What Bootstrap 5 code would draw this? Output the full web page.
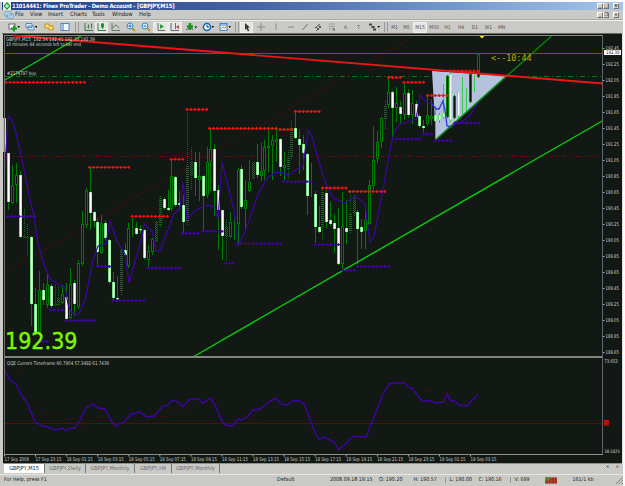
<!DOCTYPE html>
<html lang="en">
<head>
  <meta charset="UTF-8" />
  <meta name="viewport" content="width=device-width, initial-scale=1.0"/>
  <title>Finex ProTrader</title>
  <link href="https://cdn.jsdelivr.net/npm/bootstrap@5.3.0/dist/css/bootstrap.min.css" rel="stylesheet">
  <style>
    body {
      width: 625px; height: 486px; overflow: hidden;
      background: #fbfbfb; padding-top: 2px;
      font-family: "DejaVu Sans Condensed", "DejaVu Sans", sans-serif;
      font-size: 5.5px; line-height: 1; color: #1c1c1c;
    }
    .terminal { width: 623px; height: 484px; background: #c9c9c5 repeating-conic-gradient(#d0d0cc 0 25%, #c3c3bf 0 50%) 0 0 / 2px 2px; }
    .title-strip { height: 8px; margin-left: 2px; background: linear-gradient(90deg, #20428c, #4463a2 40%, #7093c8 70%, #a5c5ea); color: #fff; font: bold 5.8px "DejaVu Sans Condensed", "DejaVu Sans", sans-serif; letter-spacing: -.2px; }
    .menu-strip { height: 10px; padding-left: 4px; border-bottom: 1px solid #aaa; font-size: 5.8px; }
    .menu-strip .entry { white-space: nowrap; }
    .tool-strip { height: 13px; border-top: 1px solid #eee; padding-left: 5px; font-size: 5px; color: #555; }
    .tool-strip .slot { height: 11px; flex: none; }
    .tool-strip .pressed { background: #e4e4e1; outline: 1px solid #eeeeec; outline-offset: -1px; }
    .tool-strip svg { width: 12px; height: 10px; }
    .win-btn { width: 6px; height: 6px; background: #d0d0cc; border: 1px solid #777; border-top-color: #fff; border-left-color: #fff; color: #111; font-size: 5px; line-height: 3px; letter-spacing: 0; }
    .workspace { height: 431px; flex: none; padding-left: 2px; }
    .workspace svg { display: block; }
    .tab-strip { height: 9px; padding-left: 4px; color: #6c6c6c; }
    .tab-strip .sheet { height: 9px; border-right: 1px solid #777; flex: none; padding-top: 2px; white-space: nowrap; }
    .tab-strip .current { background: #fff; color: #222; }
    .status-strip { height: 11px; margin-top: 1px; border-top: 1px solid #e6e6e6; font-size: 5.3px; }
    .status-strip .cell { flex: none; white-space: nowrap; }
    .status-strip .ruled { border-left: 1px solid #999; }
  </style>
  <script src="https://cdn.jsdelivr.net/npm/bootstrap@5.3.0/dist/js/bootstrap.bundle.min.js"></script>
</head>
<body>

  <!-- toolbar icons -->
  <svg class="d-none">
    <symbol id="newchart" viewBox="0 0 12 10"><rect x="1" y="2" width="6" height="5" fill="#fff" stroke="#567"/><path d="M3 6.5h6M6 3.5v6" stroke="#14a014" stroke-width="2"/><path d="M9.5 4H12l-1.2 2z"/></symbol>
    <symbol id="profiles" viewBox="0 0 12 10"><path d="M1 1.5h6v4H1zM3 4h6v4H3z" fill="#dcecfa" stroke="#5d86b5"/><path d="M10 4h2.5l-1.2 2z"/></symbol>
    <symbol id="market" viewBox="0 0 12 10"><path d="M2 2h4v2h4v4H6V6H2z" fill="#ffe37a" stroke="#c09018"/></symbol>
    <symbol id="navi" viewBox="0 0 12 10"><rect x="2" y="1.5" width="8" height="7" fill="#f4f8ff" stroke="#5487bd"/><path d="M4 2v6" stroke="#3b74ba"/></symbol>
    <symbol id="bars" viewBox="0 0 12 10"><path d="M2 1v7.5h8M5.500 2.500v4M8.500 1.500v5M4.500 5h1M8.500 3h1" fill="none" stroke="#3d7c46"/></symbol>
    <symbol id="candle" viewBox="0 0 12 10"><path d="M2 1v7.5h8M6.500 0v7" fill="none" stroke="#3d7c46"/><rect x="5" y="1.5" width="3" height="4" fill="#10a020"/></symbol>
    <symbol id="linec" viewBox="0 0 12 10"><path d="M2 1v7.5h8M2 6l4-3 3 3" fill="none" stroke="#5f7d65"/></symbol>
    <symbol id="zin" viewBox="0 0 12 10"><path d="M7 6l3 3" stroke="#c29928" stroke-width="2"/><circle cx="5" cy="4" r="3" fill="#d9efff" stroke="#3f84c6"/><path d="M3.500 4h3M5 2.500v3" stroke="#2166b5"/></symbol>
    <symbol id="zout" viewBox="0 0 12 10"><path d="M7 6l3 3" stroke="#c29928" stroke-width="2"/><circle cx="5" cy="4" r="3" fill="#d9efff" stroke="#3f84c6"/><path d="M3.500 4h3" stroke="#2166b5"/></symbol>
    <symbol id="scroll" viewBox="0 0 12 10"><path d="M3 1v7.5h7" fill="none" stroke="#667"/><path d="M5 2l4 2.500L5 7z" fill="#29a03a"/></symbol>
    <symbol id="shift" viewBox="0 0 12 10"><path d="M2 1v7.5h8M6.500 1v6" fill="none" stroke="#667"/><path d="M10 3v4L7 5z" fill="#b44"/></symbol>
    <symbol id="indic" viewBox="0 0 12 10"><path d="M5 1v7M2 4.500h6" stroke="#129b1a" stroke-width="2.500"/><path d="M1 8l5-3 2 3" fill="none" stroke="#555"/><path d="M9.500 4.500H12l-1.200 2z"/></symbol>
    <symbol id="clock" viewBox="0 0 12 10"><circle cx="5" cy="5" r="3.500" fill="#eef7ff" stroke="#1765b7" stroke-width="1.500"/><path d="M5 3v2h2" fill="none" stroke="#235"/><path d="M9.500 4h2.500l-1.200 2z"/></symbol>
    <symbol id="tmpl" viewBox="0 0 12 10"><rect x="1" y="1.500" width="7" height="7" fill="#e6f3ff" stroke="#4b86c0"/><path d="M1 3h7" stroke="#4b86c0"/><path d="M2 7l2-2 2 1 2-2" fill="none" stroke="#c93"/><path d="M9.500 4h2.500l-1.200 2z"/></symbol>
    <symbol id="arrow" viewBox="0 0 12 10"><path d="M4 1l5 4.500H7L8.200 9l-1.400.3L5.500 6.500 4 8z" fill="#333"/></symbol>
    <symbol id="cross" viewBox="0 0 12 10"><path d="M6 1v8M2 5h8" stroke="#888"/></symbol>
    <symbol id="vline" viewBox="0 0 12 10"><path d="M6 1.500v6.500" stroke="#888"/></symbol>
    <symbol id="hline" viewBox="0 0 12 10"><path d="M3 5h6" stroke="#888"/></symbol>
    <symbol id="trend" viewBox="0 0 12 10"><path d="M3.500 8l5-6" stroke="#777"/></symbol>
    <symbol id="chan" viewBox="0 0 12 10"><path d="M3 6l5-4M4 9l5-5M4 5l3 3M6 3l3 3" stroke="#555"/></symbol>
    <symbol id="fibo" viewBox="0 0 12 10"><path d="M3 2h6M3 4.500h6M3 7h6" stroke="#888" stroke-dasharray="1 .5"/><path d="M8 6v3" stroke="#555"/></symbol>
    <symbol id="marks" viewBox="0 0 12 10"><path d="M1 2.500h3M3.500 5h3M5 7.500h3" stroke="#444" stroke-width="2"/><path d="M9.500 4h2.500l-1.200 2z"/></symbol>
    <symbol id="grip" viewBox="0 0 12 10"><path d="M4.500 0v10M7.500 0v10" stroke="#999"/></symbol>
  </svg>

  <div class="terminal d-flex flex-column">
    <div class="title-strip d-flex align-items-center flex-shrink-0">
      <svg width="10" height="8" viewBox="0 0 10 8"><rect x="1" width="8" height="8" fill="#e8f4e4"/><path d="M5 0l3.500 4L5 8 1.500 4z" fill="#149a2c"/><path d="M5 2v4M3 4h4" stroke="#fff"/></svg>
      <span class="text-nowrap">11014441: Finex ProTrader - Demo Account - [GBPJPY,M15]</span>
      <div class="ms-auto d-flex me-1">
        <span class="win-btn text-center">_</span><span class="win-btn text-center">□</span><span class="win-btn text-center ms-1">×</span>
      </div>
    </div>

    <div class="menu-strip d-flex align-items-center flex-shrink-0" id="menu">
      <svg width="11" height="8" viewBox="0 0 11 8"><path d="M1 1h6v4H1zM3 3h6v4H3z" fill="#e8f4ff" stroke="#6b9cca"/></svg>
    </div>

    <div class="tool-strip d-flex align-items-center flex-shrink-0" id="tools"></div>

    <div class="workspace">
      <svg id="chart" width="621" height="431" viewBox="2 33 621 431" font-family="DejaVu Sans, sans-serif" font-size="5"></svg>
    </div>

    <div class="tab-strip d-flex flex-shrink-0" id="tabs"></div>
    <div class="status-strip d-flex align-items-center flex-shrink-0" id="status"></div>
  </div>

  <script>
    // label, slot width
    const menu = [["File", 15], ["View", 18], ["Insert", 22], ["Charts", 22], ["Tools", 20], ["Window", 27], ["Help", 20]];
    document.getElementById("menu").innerHTML +=
      menu.map(m => `<span class="entry" style="width:${m[1]}px">${m[0]}</span>`).join("") +
      `<div class="ms-auto d-flex me-1"><span class="win-btn text-center">_</span><span class="win-btn text-center">❐</span><span class="win-btn text-center ms-1">×</span></div>`;

    // icon or period, slot width, pressed
    const tools = [["newchart", 17], ["profiles", 18], ["market", 18], ["navi", 14], ["grip", 10], ["bars", 13], ["candle", 13, 1],
      ["linec", 15], ["zin", 15], ["zout", 15], ["scroll", 15, 1], ["shift", 14, 1], ["indic", 18], ["clock", 16], ["tmpl", 18],
      ["grip", 6], ["arrow", 13, 1], ["cross", 15], ["vline", 16], ["hline", 14], ["trend", 13], ["chan", 14], ["fibo", 14],
      ["A", 13], ["T", 13], ["marks", 18], ["grip", 6], ["M1", 11], ["M5", 13], ["M15", 14, 1], ["M30", 14], ["H1", 13], ["H4", 14],
      ["D1", 14], ["W1", 13], ["MN", 13]];
    document.getElementById("tools").innerHTML = tools.map(([n, w, on]) =>
      `<span class="slot d-flex align-items-center justify-content-center${on ? " pressed" : ""}" style="width:${w}px">` +
      (document.getElementById(n) ? `<svg class="flex-shrink-0"><use href="#${n}"/></svg>` : n) + `</span>`).join("");

    const tabs = [["GBPJPY,M15", 41], ["GBPJPY,Daily", 41], ["GBPJPY,Monthly", 49], ["GBPJPY,H4", 37], ["GBPJPY,Monthly", 48]];
    document.getElementById("tabs").innerHTML = tabs.map((t, i) =>
      `<span class="sheet text-center${i ? "" : " current"}" style="width:${t[1]}px">${t[0]}</span>`).join("") +
      `<span class="ms-auto me-1 d-flex gap-2"><span>◂</span><span>▸</span></span>`;

    const cells = [["For Help, press F1", 273], ["Default", 53], ["2008.09.18 19:15", 49], ["O: 190.20", 34.5], ["H: 190.57", 31],
      ["L: 190.00", 34, 1], ["C: 190.16", 31], ["V: 699", 35, 1]];
    document.getElementById("status").innerHTML = `<span class="ps-1 ms-n1"></span>` + cells.map(([t, w, r]) =>
      `<span class="cell${r ? " ruled ps-1" : ""}" style="width:${w}px">${t}</span>`).join("") +
      `<svg width="12" height="7"><path d="M0 .5h12v6H0z" fill="#b33a26"/><path d="M0 .5h6l-2 3H0z" fill="#5a9a2a"/><path d="M2 0v7M5 0v7M8 0v7M11 0v7" stroke="#64302a" stroke-width=".6"/></svg>` +
      `<span class="cell ms-3">161/1 kb</span><svg class="ms-auto" width="8" height="8"><path d="M1 8l7-7M4 8l4-4M7 8l1-1" stroke="#888"/></svg>`;

    const G = "#007c05", P = "#3e05a4", R = "#ef1414";
    let out = "";
    const box = (x, y, w, h, f) => out += `<rect x="${x}" y="${y}" width="${w}" height="${h}" fill="${f}"/>`;
    const line = (x1, y1, x2, y2, c, extra = "") => out += `<path d="M${x1} ${y1}L${x2} ${y2}" stroke="${c}" ${extra}/>`;
    const poly = (pts, c, w) => out += `<polyline points="${pts}" fill="none" stroke="${c}" stroke-width="${w}"/>`;
    const text = (x, y, s, w, c = "#d2d2d2", extra = "") =>
      out += `<text x="${x}" y="${y}" fill="${c}" textLength="${w}" lengthAdjust="spacingAndGlyphs" ${extra}>${s}</text>`;

    box(3, 34, 619, 430, "#121813");
    box(2, 33, 620, 1, "#696965");
    box(4, 35, 599, 1, "#8b8b85");
    box(622, 34, 1, 430, "#dedede");
    line(4, 53.5, 603, 53.5, "#6a5b04");
    line(4, 76.5, 603, 76.5, "#087a0c", 'stroke-dasharray="5 3 1 3"');
    line(4, 156.5, 603, 156.5, "#780306", 'stroke-dasharray="4 2 1 2 1 3"');
    line(4, 273, 410, 39, "#700508", 'stroke-dasharray="2 2" stroke-width=".8"');
    out += `<path d="M432 71L507 76 436 140z" fill="#b4c2df"/>`;

    // x, high, body top, body bottom, low, kind: w falling, g rising, d dotted, k rising on the shaded area
    const candles = `4.5 114 118 152 170 w|8.5 153 153 202 210 w|12.5 165 185 203 204 g|16.5 163 175 185 203 g|20.5 171 175 237 238 w|24.5 209 236 238 239 d
27.5 224 237 239 255 d|31.5 236 237 304 326 w|35.5 288 304 332 333 w|39.5 271 290 332 333 g|43.5 283 290 300 305 w|47.5 273 284 305 308 g|51.5 284 286 306 308 w
55.5 285 304 306 307 d|58.5 287 298 306 307 d|62.5 285 294 303 304 g|66.5 283 297 319 321 w|70.5 268 284 318 320 g|74.5 280 283 304 316 w|78.5 260 263 307 309 g
82.5 211 224 264 266 g|86.5 188 190 225 228 g|90.5 168 192 213 230 w|94.5 211 212 221 227 w|97.5 218 222 252 265 w|101.5 215 223 253 254 g|105.5 220 223 238 240 w
109.5 239 240 282 284 w|113.5 272 282 298 300 w|117.5 276 298 299 301 w|121.5 248 250 292 295 d|125.5 243 250 255 257 w|128.5 223 228 266 268 g
132.5 218 228 228 237 g|136.5 222 228 234 235 w|140.5 225 229 230 234 w|144.5 229 230 258 260 w|148.5 245 251 260 267 g|152.5 238 239 252 255 g
156.5 221 222 242 243 d|160.5 196 198 226 228 d|164.5 197 199 208 210 w|168.5 190 208 210 211 w|171.5 160 176 209 211 g|175.5 176 177 205 207 w
179.5 191 203 205 210 w|183.5 195 205 222 233 w|187.5 112 166 222 225 d|191.5 147 162 176 191 d|195.5 152 162 178 196 w|199.5 152 176 180 201 g
203.5 175 176 196 231 w|207.5 147 162 195 198 g|210.5 128 149 162 191 g|214.5 144 149 191 216 w|218.5 185 190 210 250 w|222.5 210 210 236 260 w
226.5 220 227 237 262 d|230.5 212 222 237 238 g|234.5 217 222 222 240 g|238.5 168 170 224 246 g|241.5 165 169 207 209 w|245.5 180 200 209 230 g
249.5 160 182 191 192 g|253.5 162 163 178 180 d|257.5 144 162 175 178 w|261.5 143 171 176 181 g|264.5 140 147 171 180 g|268.5 129 146 148 172 g
272.5 135 140 146 180 g|276.5 128 139 142 162 g|280.5 138 139 167 176 w|284.5 152 165 168 180 g|288.5 150 158 170 180 d|291.5 120 128 158 160 d
295.5 112 128 138 139 w|299.5 129 139 145 174 w|303.5 135 144 153 170 w|307.5 153 154 196 215 w|311.5 163 196 196 197 g|315.5 191 194 227 243 w
319.5 206 227 232 233 w|322.5 190 192 228 240 d|326.5 190 193 222 228 w|330.5 202 220 224 226 w|334.5 214 223 229 253 w|338.5 208 228 264 265 w
342.5 192 226 264 270 g|346.5 200 228 232 244 w|350.5 192 214 232 234 d|354.5 195 198 213 216 d|357.5 210 212 229 264 w|361.5 219 227 232 249 w
365.5 209 220 231 249 g|369.5 180 185 224 225 g|373.5 126 160 186 190 g|377.5 131 142 159 163 g|381.5 117 118 142 148 g|385.5 100 106 119 130 d
388.5 79 92 105 108 g|392.5 90 92 108 140 w|396.5 87 103 108 122 g|400.5 101 107 114 124 w|404.5 82 93 115 120 g|408.5 89 93 115 118 w
412.5 90 103 115 124 g|416.5 101 104 117 119 w|419.5 114 116 126 128 w|423.5 120 126 128 133 w|427.5 97 115 124 126 g|431.5 99 116 119 125 g
435.5 106 115 121 139 w|439.5 113 115 120 123 w|443.5 84 113 117 119 w|447 75 76 117 118 k|450.5 73 74 120 122 w|454.5 95 96 118 119 k
458.5 92 92 116 120 w|462.5 77 112 113 114 g|466.5 88 111 112 113 g|470.5 73 74 102 103 k|474.5 75 77 78 92 g|478.5 53 54 77 78 g`;
    candles.split(/[|\n]/).forEach(row => {
      const c = row.trim().split(/\s+/), k = c.pop();
      const [x, hi, top, bot, lo] = c.map(Number), px = Math.floor(x);
      const wick = x > 434 && k !== "k" && x < 477 ? "#35c947" : G;
      line(px + .5, hi, px + .5, lo, k === "d" ? "#087310" : wick, k === "d" ? 'stroke-dasharray="1 1"' : "");
      if (k === "w") {
        box(px - 1, top, 3, Math.max(1, bot - top), "#38cf4c");
        box(px - .3, top + .3, 1.9, Math.max(1, bot - top - .6), "#fff");
      } else if (k === "d") {
        out += `<path d="M${px - .5} ${top}v${bot - top}M${px + 1.5} ${top}v${bot - top}" stroke="#355b37" stroke-dasharray="1 1"/>`;
      } else if (bot - top > 1) {
        out += `<rect x="${px - .5}" y="${top + .5}" width="2" height="${bot - top - 1}" fill="#061408" stroke="${G}"/>`;
      }
    });

    // trailing average
    poly(`4,190 8,116 10,118 13,121 20,150 28,190 34,217 38,243 43,262 50,279 58,284 65,287 68,304 71,312 76,315 80,312 86,296
      93,260 98,246 106,244 110,221 118,243 125,254 129,283 136,258 142,237 144,224 152,231 156,251 160,250 168,230 174,214
      180,208 183,182 187,219 195,211 204,206 209,205 215,208 218,219 222,162 229,190 234,210 238,245 245,232 250,217 257,197
      267,178 276,172 285,173 288,176 297,169 303,166 308,130 312,137 317,155 325,182 333,198 345,203 356,196 365,204 370,242
      374,236 381,200 390,150 394,132 400,124 410,121 416,119 420,95 426,102 432,104`, P, 1.2);
    poly("432,104 436,109 439,109 443,101 445,110 447,126 452,127", "#3037e0", 1.3);
    poly("452,127 456,124 463,121 470,115 478,102", P, 1.2);

    line(4, 80.5, 81, 36, "#10c814", 'stroke-width="1.4"');
    line(193, 357, 603, 120.5, "#07cf0b", 'stroke-width="1.4"');
    line(436, 139.5, 551.5, 36, "#087f0d", 'stroke-width="1.6"');
    line(13, 35.5, 603, 83.5, "#ee1515", 'stroke-width="1.9"');

    // channel levels: from, to, y
    const dots = (rows, c) => rows.forEach(([a, b, y]) => {
      for (let x = a; x <= b + 1; x += 3.92) {
        out += `<path d="M${x - 1.5} ${y}h3M${x} ${y - 1.4}v2.8" stroke="${c}" stroke-width="1.3"/>`;
      }
      line(a, y, b, y, c, 'stroke-width=".5"');
    });
    dots([[6, 85, 82.3], [89.5, 129, 167.3], [132, 168, 216.3], [171, 183, 159.3], [187, 207, 109.5], [209.5, 276, 128.5], [280, 292, 129.5],
      [295.5, 319, 111.5], [322.5, 346, 188], [349.5, 385, 191.5], [388.5, 400, 77.5], [404, 424, 82.3], [427.5, 447, 95.5], [450.5, 478, 71]], R);
    dots([[7.5, 36, 216.5], [39, 48, 341.5], [50.5, 63, 310], [66.5, 94, 320.5], [97.5, 110, 266.5], [112.5, 144, 300.6], [148, 179, 268], [182.5, 199, 233.5],
      [202.5, 223, 231.3], [225.5, 234, 263.3], [237.5, 280, 243.6], [283.5, 311, 181.6], [315, 339, 244.6], [342.5, 354, 270.3],
      [357.5, 389, 266.5], [392.5, 420, 139], [423.5, 432, 134], [435, 451, 140.7], [455, 478, 123]], P);

    text(6, 41.2, "GBPJPY,M15 &#160;192.34 192.41 192.33 192.39", 89);
    text(6, 46.3, "10 minutes 44 seconds left to bar end", 75);
    text(7, 75.3, "#2174797 buy", 29);
    text(491, 61, "&lt;--10:44", 40.5, "#b9b100", 'font-size="8" font-family="DejaVu Sans Mono"');
    text(5, 349.3, "192.39", 72.5, "#7cf800", 'font-size="23.5" stroke="#7cf800" stroke-width=".4"');
    out += `<path d="M479.5 36h5L482 38.5z" fill="#ffee00"/>`;

    // lower pane
    box(4, 356, 599, 2, "#82827e");
    line(4, 423.5, 603, 423.5, "#6d0507");
    out += `<path d="M17 371.5v4M34 406.5h2M44 412.5h4M56 415.5h2M67 418.5h11M80 425.5h4M96 417.5h11M130 423.5h8M160 416.5h5M172 409.5h16M210 406.5h6M247 423.5h2M254 419.5h4M276 406.5h4M310 413.5h2M332 432.5h1M350 449.5h1M369 435.5h2M375 420.5h2M382 406.5h1M424 390.5h8M444 392.5h12M465 396.5h1" fill="none" stroke="#66080b" stroke-dasharray="1 2"/>`;
    poly(`4,367 6,373 10,380 13,382 16,384 19,391 22,396 28,404 31,412 35,422 39,424 42,426 48,427 56,430 62,428 66,431 71,428 75,428 80,420 83,413 86,408 93,404 98,408
      105,409 112,422 116,426 119,424 124,422 131,414 136,413 140,412 145,416 148,417 154,416 162,407 168,405 172,400 178,402 183,407 190,399 198,399 203,403
      210,398 213,402 217,409 221,419 225,425 233,426 238,419 242,420 248,416 253,410 260,409 270,401 276,398 281,404 287,405 292,401 300,401 304,404 309,417
      314,430 319,440 323,437 328,439 334,442 339,450 341,447 346,444 350,439 354,436 359,437 366,437 372,422 378,407 382,396 389,384 395,383 405,383 408,387
      412,388 418,396 422,401 431,401 436,403 443,402 447,394 451,401 455,401 459,405 467,406 471,401 474,399 478,394`, P, 1.4);
    text(7, 364.5, "QQE Current Timeframe 60.7904 57.3492 61.7436", 102);

    // scales
    box(4, 36, 1, 418, "#77716f");
    box(602, 36, 1, 419, "#62626a");
    box(4, 454, 599, 1, "#8f8f8b");
    box(3, 463, 619, 1, "#8f8f8b");
    for (let i = 0; i < 20; i++) {
      const y = 48 + i * 16;
      box(603, y, 1.5, 1, "#aaa");
      text(605.5, y + 2, (192.45 - i * .2).toFixed(2), 13.5);
    }
    box(604, 50, 17, 5, "#fff");
    text(606, 54.4, "192.39", 13.5, "#222");
    text(604.3, 363, "73.653", 13.5);
    box(604, 420, 5, 5.5, "#d8140e");
    text(604.3, 424.8, "50", 4.5, "#4c0000");
    text(604.3, 453, "38.5025", 15.5, "#d2d2d2", 'font-size="4.6"');
    ["17 Sep 2008", "17 Sep 23:15", "18 Sep 01:15", "18 Sep 03:15", "18 Sep 05:15", "18 Sep 07:15", "18 Sep 09:15", "18 Sep 11:15", "18 Sep 13:15",
      "18 Sep 15:15", "18 Sep 17:15", "18 Sep 19:15", "18 Sep 21:15", "18 Sep 23:15", "19 Sep 01:15", "19 Sep 03:15"].forEach((s, i) => {
      const x = 4 + i * 31.07;
      box(x, 455, 1, 1.5, "#aaa");
      text(x + .5, 461.2, s, i ? 26 : 24.5);
    });
    document.getElementById("chart").innerHTML = out;
  </script>

</body>
</html>
